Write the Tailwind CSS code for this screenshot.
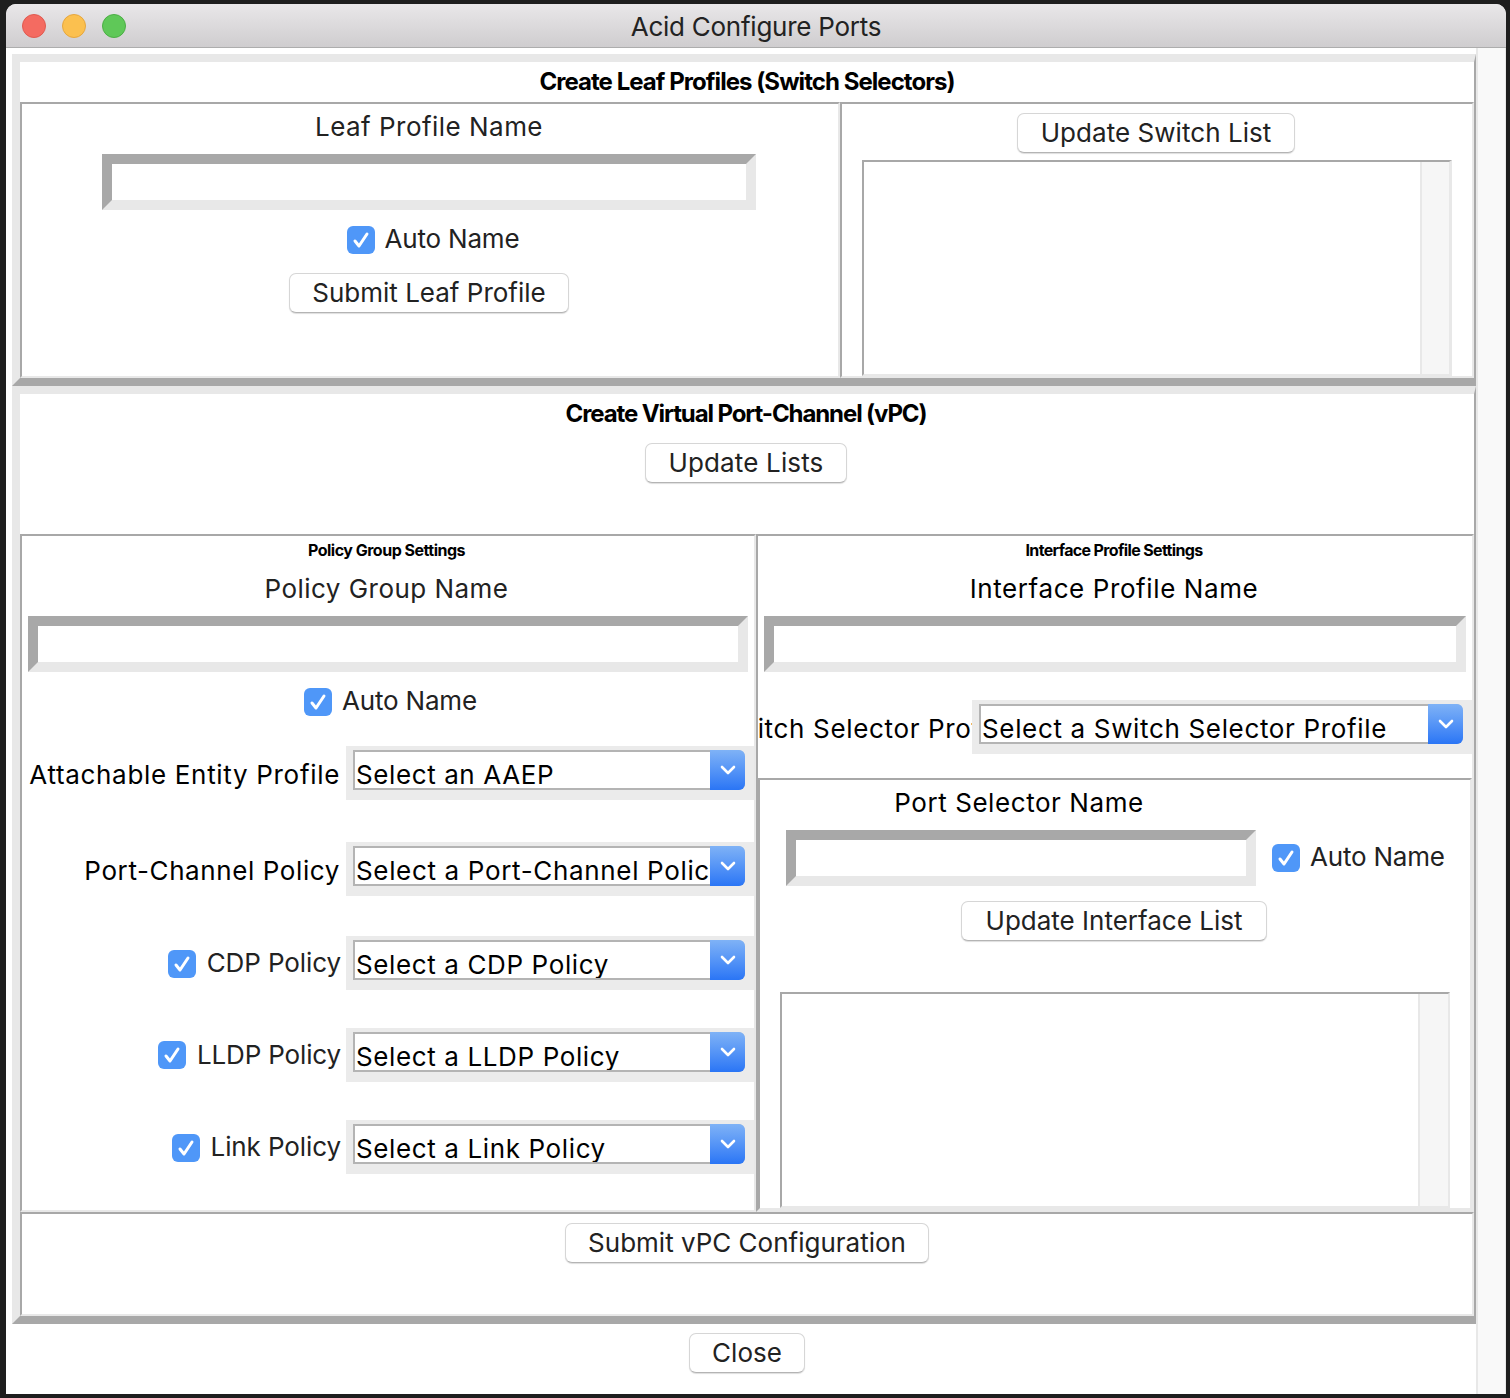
<!DOCTYPE html>
<html lang="en">
<head>
  <meta charset="UTF-8" />
  <title>Acid Configure Ports</title>
  <script src="https://cdn.jsdelivr.net/npm/@tailwindcss/browser@4"></script>
</head>
<body class="bg-[#1e1e1e] font-['Inter',sans-serif] text-[26px] leading-[32px] text-[#222] overflow-hidden">
  <div class="w-[1510px] h-[1398px] pt-[4px] pl-[6px]">
    <div class="w-[1500px] h-[1390px] bg-white rounded-t-[10px] overflow-hidden flex flex-col">
      <!-- title bar -->
      <div class="h-[44px] shrink-0 bg-gradient-to-b from-[#e9e7e9] to-[#cfcdcf] border-b border-[#adadad] flex items-center relative">
        <div class="flex gap-[16px] pl-[16px]">
          <span class="w-[24px] h-[24px] rounded-full bg-[#f46b61] border border-[#df5a50]"></span>
          <span class="w-[24px] h-[24px] rounded-full bg-[#fbc04f] border border-[#e5a63e]"></span>
          <span class="w-[24px] h-[24px] rounded-full bg-[#5fc858] border border-[#4cae45]"></span>
        </div>
        <div class="absolute inset-x-0 top-[7px] text-center tracking-[-0.25px]">Acid Configure Ports</div>
      </div>

      <div class="flex flex-1">
        <div class="w-[1470px] pl-[6px] pt-[6px]">

          <!-- leaf profiles -->
          <div class="h-[332px] border-t-[8px] border-l-[8px] border-b-[8px] border-r-2 border-t-[#e8e8e8] border-l-[#e8e8e8] border-b-[#a8a8a8] border-r-[#a8a8a8]">
            <div class="h-[40px] flex items-center justify-center font-bold text-[24px] tracking-[-0.95px] text-black">Create Leaf Profiles (Switch Selectors)</div>
            <div class="flex h-[276px]">
              <div class="w-[820px] border-l-2 border-t-2 border-r-2 border-b-2 border-l-[#a8a8a8] border-t-[#a8a8a8] border-r-[#e8e8e8] border-b-[#e8e8e8] flex flex-col items-center pr-[2px]">
                <div class="mt-[7px] tracking-[0.47px]">Leaf Profile Name</div>
                <input class="mt-[11px] w-[654px] h-[56px] bg-white border-[10px] border-t-[#a8a8a8] border-l-[#a8a8a8] border-r-[#e8e8e8] border-b-[#e8e8e8]" />
                <label class="mt-[16px] ml-[8px] flex items-center gap-[10px] h-[28px] tracking-[-0.2px]">
                  <span class="w-[28px] h-[28px] rounded-[6px] bg-[#4f97f8] flex items-center justify-center"><svg width="20" height="20" viewBox="0 0 20 20" fill="none" stroke="#fff" stroke-width="3" stroke-linecap="round" stroke-linejoin="round"><path d="M4 11l4 5 8-12"/></svg></span>
                  <span class="pb-[2px]">Auto Name</span>
                </label>
                <button class="mt-[19px] w-[280px] h-[40px] bg-white border border-[#d6d6d6] border-b-[#b4b4b4] rounded-[7px] shadow-[0_1px_1px_#0002]">Submit Leaf Profile</button>
              </div>
              <div class="flex-1 border-l-2 border-t-2 border-r-2 border-b-2 border-l-[#a8a8a8] border-t-[#a8a8a8] border-r-[#e8e8e8] border-b-[#e8e8e8] flex flex-col pr-[20px] pl-[20px]">
                <button class="mt-[9px] ml-[155px] w-[278px] h-[40px] tracking-[0.05px] bg-white border border-[#d6d6d6] border-b-[#b4b4b4] rounded-[7px] shadow-[0_1px_1px_#0002]">Update Switch List</button>
                <div class="mt-[7px] w-full flex-1 flex border-t-2 border-l-2 border-r-[3px] border-b-2 border-t-[#a8a8a8] border-l-[#a8a8a8] border-r-[#e8e8e8] border-b-[#e8e8e8]">
                  <div class="flex-1"></div>
                  <div class="w-[29px] bg-[#f6f6f6] border-l-2 border-[#e8e8e8]"></div>
                </div>
              </div>
            </div>
          </div>

          <!-- vPC -->
          <div class="h-[938px] border-t-[8px] border-l-[8px] border-b-[8px] border-r-2 border-t-[#e8e8e8] border-l-[#e8e8e8] border-b-[#a8a8a8] border-r-[#a8a8a8] flex flex-col">
            <div class="h-[140px] flex flex-col items-center pr-[2px]">
              <div class="h-[40px] flex items-center font-bold text-[24px] tracking-[-1.1px] text-black">Create Virtual Port-Channel (vPC)</div>
              <button class="mt-[9px] w-[202px] h-[40px] tracking-[0.15px] bg-white border border-[#d6d6d6] border-b-[#b4b4b4] rounded-[7px] shadow-[0_1px_1px_#0002]">Update Lists</button>
            </div>

            <div class="flex h-[678px]">
              <!-- policy group -->
              <div class="w-[736px] border-l-2 border-t-2 border-r-2 border-b-2 border-l-[#a8a8a8] border-t-[#a8a8a8] border-r-[#e8e8e8] border-b-[#e8e8e8] flex flex-col">
                <div class="h-[28px] pr-[3px] flex items-center justify-center font-bold text-[16px] tracking-[-0.5px] text-black">Policy Group Settings</div>
                <div class="mt-[9px] pr-[3px] text-center tracking-[0.47px]">Policy Group Name</div>
                <input class="ml-[6px] mt-[11px] w-[720px] h-[56px] bg-white border-[10px] border-t-[#a8a8a8] border-l-[#a8a8a8] border-r-[#e8e8e8] border-b-[#e8e8e8]" />
                <label class="mt-[16px] pl-[5px] flex items-center justify-center gap-[10px] h-[28px] tracking-[-0.2px]">
                  <span class="w-[28px] h-[28px] rounded-[6px] bg-[#4f97f8] flex items-center justify-center"><svg width="20" height="20" viewBox="0 0 20 20" fill="none" stroke="#fff" stroke-width="3" stroke-linecap="round" stroke-linejoin="round"><path d="M4 11l4 5 8-12"/></svg></span>
                  <span class="pb-[2px]">Auto Name</span>
                </label>

                <div class="mt-[30px] flex h-[54px]">
                  <div class="w-[324px] pr-[6px] flex items-center justify-end text-black whitespace-nowrap pt-[4px] tracking-[0.68px]">Attachable Entity Profile</div>
                  <div class="w-[408px] bg-[#ebebeb] pt-[4px] pl-[7px]">
                    <div class="w-[392px] h-[40px] bg-white border-t-2 border-l-2 border-b-2 border-[#b4b4b4] rounded-r-[7px] flex relative text-black">
                      <span class="flex-1 pl-[1px] pt-[7px] whitespace-nowrap overflow-hidden tracking-[0.6px]">Select an AAEP</span>
                      <span class="w-[35px] -mt-[2px] h-[40px] rounded-r-[6px] bg-gradient-to-b from-[#7fb2f6] to-[#2a75f5] flex items-center justify-center"><svg width="20" height="14" viewBox="0 0 20 14" fill="none" stroke="#fff" stroke-width="2.6" stroke-linecap="round" stroke-linejoin="round"><path d="M4 4l6 6 6-6"/></svg></span>
                    </div>
                  </div>
                </div>

                <div class="mt-[42px] flex h-[54px]">
                  <div class="w-[324px] pr-[6px] flex items-center justify-end text-black whitespace-nowrap pt-[4px] tracking-[0.6px]">Port-Channel Policy</div>
                  <div class="w-[408px] bg-[#ebebeb] pt-[4px] pl-[7px]">
                    <div class="w-[392px] h-[40px] bg-white border-t-2 border-l-2 border-b-2 border-[#b4b4b4] rounded-r-[7px] flex relative text-black">
                      <span class="flex-1 pl-[1px] pt-[7px] whitespace-nowrap overflow-hidden tracking-[0.66px]">Select a Port-Channel Policy</span>
                      <span class="w-[35px] -mt-[2px] h-[40px] rounded-r-[6px] bg-gradient-to-b from-[#7fb2f6] to-[#2a75f5] flex items-center justify-center"><svg width="20" height="14" viewBox="0 0 20 14" fill="none" stroke="#fff" stroke-width="2.6" stroke-linecap="round" stroke-linejoin="round"><path d="M4 4l6 6 6-6"/></svg></span>
                    </div>
                  </div>
                </div>

                <div class="mt-[40px] flex h-[54px]">
                  <div class="w-[324px] pr-[5px] flex items-center justify-end gap-[11px] whitespace-nowrap tracking-[-0.1px]">
                    <span class="mt-[2px] w-[28px] h-[28px] rounded-[6px] bg-[#4f97f8] flex items-center justify-center"><svg width="20" height="20" viewBox="0 0 20 20" fill="none" stroke="#fff" stroke-width="3" stroke-linecap="round" stroke-linejoin="round"><path d="M4 11l4 5 8-12"/></svg></span>
                    CDP Policy
                  </div>
                  <div class="w-[408px] bg-[#ebebeb] pt-[4px] pl-[7px]">
                    <div class="w-[392px] h-[40px] bg-white border-t-2 border-l-2 border-b-2 border-[#b4b4b4] rounded-r-[7px] flex relative text-black">
                      <span class="flex-1 pl-[1px] pt-[7px] whitespace-nowrap overflow-hidden tracking-[0.62px]">Select a CDP Policy</span>
                      <span class="w-[35px] -mt-[2px] h-[40px] rounded-r-[6px] bg-gradient-to-b from-[#7fb2f6] to-[#2a75f5] flex items-center justify-center"><svg width="20" height="14" viewBox="0 0 20 14" fill="none" stroke="#fff" stroke-width="2.6" stroke-linecap="round" stroke-linejoin="round"><path d="M4 4l6 6 6-6"/></svg></span>
                    </div>
                  </div>
                </div>

                <div class="mt-[38px] flex h-[54px]">
                  <div class="w-[324px] pr-[5px] flex items-center justify-end gap-[11px] whitespace-nowrap tracking-[-0.15px]">
                    <span class="w-[28px] h-[28px] rounded-[6px] bg-[#4f97f8] flex items-center justify-center"><svg width="20" height="20" viewBox="0 0 20 20" fill="none" stroke="#fff" stroke-width="3" stroke-linecap="round" stroke-linejoin="round"><path d="M4 11l4 5 8-12"/></svg></span>
                    LLDP Policy
                  </div>
                  <div class="w-[408px] bg-[#ebebeb] pt-[4px] pl-[7px]">
                    <div class="w-[392px] h-[40px] bg-white border-t-2 border-l-2 border-b-2 border-[#b4b4b4] rounded-r-[7px] flex relative text-black">
                      <span class="flex-1 pl-[1px] pt-[7px] whitespace-nowrap overflow-hidden tracking-[0.62px]">Select a LLDP Policy</span>
                      <span class="w-[35px] -mt-[2px] h-[40px] rounded-r-[6px] bg-gradient-to-b from-[#7fb2f6] to-[#2a75f5] flex items-center justify-center"><svg width="20" height="14" viewBox="0 0 20 14" fill="none" stroke="#fff" stroke-width="2.6" stroke-linecap="round" stroke-linejoin="round"><path d="M4 4l6 6 6-6"/></svg></span>
                    </div>
                  </div>
                </div>

                <div class="mt-[38px] flex h-[54px]">
                  <div class="w-[324px] pr-[5px] flex items-center justify-end gap-[11px] whitespace-nowrap tracking-[-0.1px]">
                    <span class="mt-[2px] w-[28px] h-[28px] rounded-[6px] bg-[#4f97f8] flex items-center justify-center"><svg width="20" height="20" viewBox="0 0 20 20" fill="none" stroke="#fff" stroke-width="3" stroke-linecap="round" stroke-linejoin="round"><path d="M4 11l4 5 8-12"/></svg></span>
                    Link Policy
                  </div>
                  <div class="w-[408px] bg-[#ebebeb] pt-[4px] pl-[7px]">
                    <div class="w-[392px] h-[40px] bg-white border-t-2 border-l-2 border-b-2 border-[#b4b4b4] rounded-r-[7px] flex relative text-black">
                      <span class="flex-1 pl-[1px] pt-[7px] whitespace-nowrap overflow-hidden tracking-[0.62px]">Select a Link Policy</span>
                      <span class="w-[35px] -mt-[2px] h-[40px] rounded-r-[6px] bg-gradient-to-b from-[#7fb2f6] to-[#2a75f5] flex items-center justify-center"><svg width="20" height="14" viewBox="0 0 20 14" fill="none" stroke="#fff" stroke-width="2.6" stroke-linecap="round" stroke-linejoin="round"><path d="M4 4l6 6 6-6"/></svg></span>
                    </div>
                  </div>
                </div>
              </div>

              <!-- interface profile -->
              <div class="flex-1 border-l-2 border-t-2 border-r-2 border-b-2 border-l-[#a8a8a8] border-t-[#a8a8a8] border-r-[#e8e8e8] border-b-[#e8e8e8] flex flex-col min-w-0">
                <div class="h-[28px] pr-[2px] flex items-center justify-center font-bold text-[16px] tracking-[-0.65px] text-black">Interface Profile Settings</div>
                <div class="mt-[9px] pr-[2px] text-center text-black tracking-[0.6px]">Interface Profile Name</div>
                <input class="ml-[6px] mt-[11px] w-[702px] h-[56px] bg-white border-[10px] border-t-[#a8a8a8] border-l-[#a8a8a8] border-r-[#e8e8e8] border-b-[#e8e8e8]" />
                <div class="mt-[28px] flex h-[54px]">
                  <div class="w-[214px] overflow-hidden flex items-center justify-center text-black whitespace-nowrap pt-[4px] tracking-[0.66px]">Switch Selector Profile</div>
                  <div class="w-[500px] bg-[#ebebeb] pt-[4px] pl-[7px]">
                    <div class="w-[484px] h-[40px] bg-white border-t-2 border-l-2 border-b-2 border-[#b4b4b4] rounded-r-[7px] flex relative text-black">
                      <span class="flex-1 pl-[1px] pt-[7px] whitespace-nowrap overflow-hidden tracking-[0.66px]">Select a Switch Selector Profile</span>
                      <span class="w-[35px] -mt-[2px] h-[40px] rounded-r-[6px] bg-gradient-to-b from-[#7fb2f6] to-[#2a75f5] flex items-center justify-center"><svg width="20" height="14" viewBox="0 0 20 14" fill="none" stroke="#fff" stroke-width="2.6" stroke-linecap="round" stroke-linejoin="round"><path d="M4 4l6 6 6-6"/></svg></span>
                    </div>
                  </div>
                </div>

                <!-- port selector -->
                <div class="mt-[24px] w-[714px] flex-1 border-t-2 border-l-2 border-r-2 border-b-2 border-t-[#a8a8a8] border-l-[#a8a8a8] border-r-[#e8e8e8] border-b-[#e8e8e8] flex flex-col pl-[20px]">
                  <div class="flex">
                    <div class="w-[478px] flex flex-col items-center">
                      <div class="mt-[7px] text-black tracking-[0.57px]">Port Selector Name</div>
                      <input class="mt-[11px] ml-[4px] w-[470px] h-[56px] bg-white border-[10px] border-t-[#a8a8a8] border-l-[#a8a8a8] border-r-[#e8e8e8] border-b-[#e8e8e8]" />
                    </div>
                    <label class="ml-[14px] mt-[64px] flex items-center gap-[10px] h-[28px] tracking-[-0.2px]">
                      <span class="w-[28px] h-[28px] rounded-[6px] bg-[#4f97f8] flex items-center justify-center"><svg width="20" height="20" viewBox="0 0 20 20" fill="none" stroke="#fff" stroke-width="3" stroke-linecap="round" stroke-linejoin="round"><path d="M4 11l4 5 8-12"/></svg></span>
                      <span class="pb-[2px]">Auto Name</span>
                    </label>
                  </div>
                  <button class="mt-[15px] ml-[181px] w-[306px] h-[40px] bg-white border border-[#d6d6d6] border-b-[#b4b4b4] rounded-[7px] shadow-[0_1px_1px_#0002]">Update Interface List</button>
                  <div class="mt-[51px] w-[670px] flex-1 flex border-t-2 border-l-2 border-r-2 border-b-2 border-t-[#a8a8a8] border-l-[#a8a8a8] border-r-[#e8e8e8] border-b-[#e8e8e8]">
                    <div class="flex-1"></div>
                    <div class="w-[30px] bg-[#f6f6f6] border-l-2 border-[#e8e8e8]"></div>
                  </div>
                </div>
              </div>
            </div>

            <!-- submit -->
            <div class="flex-1 border-l-2 border-t-2 border-r-2 border-b-2 border-l-[#a8a8a8] border-t-[#a8a8a8] border-r-[#e8e8e8] border-b-[#e8e8e8] flex justify-center">
              <button class="mt-[9px] w-[364px] h-[40px] bg-white border border-[#d6d6d6] border-b-[#b4b4b4] rounded-[7px] shadow-[0_1px_1px_#0002]">Submit vPC Configuration</button>
            </div>
          </div>

          <div class="flex justify-center pt-[9px] pl-[6px]">
            <button class="w-[116px] h-[40px] bg-white border border-[#d6d6d6] border-b-[#b4b4b4] rounded-[7px] shadow-[0_1px_1px_#0002]">Close</button>
          </div>
        </div>
        <!-- window scrollbar gutter -->
        <div class="flex-1 bg-[#f9f9f9] border-l-2 border-r border-[#e8e8e8]"></div>
      </div>
    </div>
  </div>
</body>
</html>
